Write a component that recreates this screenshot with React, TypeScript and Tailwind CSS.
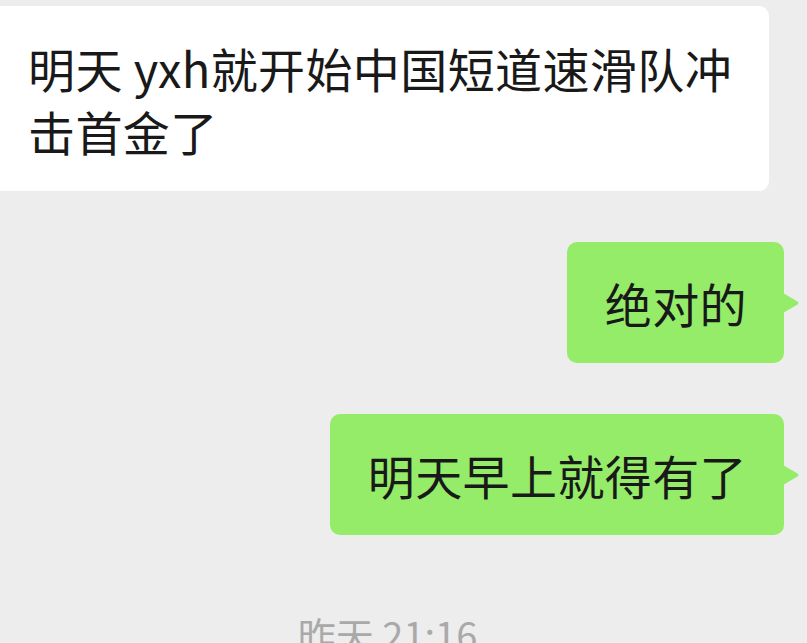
const font = { fontFamily: '"Noto Sans CJK SC", "Noto Sans", sans-serif' };

const Tail = () => (
  <svg
    className="absolute right-[-16px] top-1/2 -translate-y-1/2"
    width="17"
    height="22"
    viewBox="0 0 17 22"
  >
    <path d="M0 1 L14.5 9.6 Q16.5 11 14.5 12.4 L0 21 Z" fill="#95ec69" />
  </svg>
);

const SentBubble = ({ text }: { text: string }) => (
  <div className="flex justify-end pr-[23px]">
    <div className="relative rounded-[10px] bg-[#95ec69] py-[29px] pl-[38px] pr-[37px] text-[47px] leading-[63px] tracking-[0.4px] text-[#191919]">
      {text}
      <Tail />
    </div>
  </div>
);

export default function App() {
  return (
    <div className="h-[643px] w-full overflow-hidden bg-[#ededed] pt-[6px]" style={font}>
      <div className="w-[769px] rounded-r-[10px] bg-white pt-[30px] pb-[29px] pl-[28px] pr-[20px] text-[47px] leading-[63px] tracking-[0.4px] text-[#191919]">
        明天 yxh就开始中国短道速滑队冲击首金了
      </div>
      <div className="mt-[51px] flex flex-col gap-[51px]">
        <SentBubble text="绝对的" />
        <SentBubble text="明天早上就得有了" />
      </div>
      <div className="mt-[77px] flex justify-center pr-[32px] text-[38px] leading-[44px] text-[#a9a9a9]">
        昨天 21:16
      </div>
    </div>
  );
}
